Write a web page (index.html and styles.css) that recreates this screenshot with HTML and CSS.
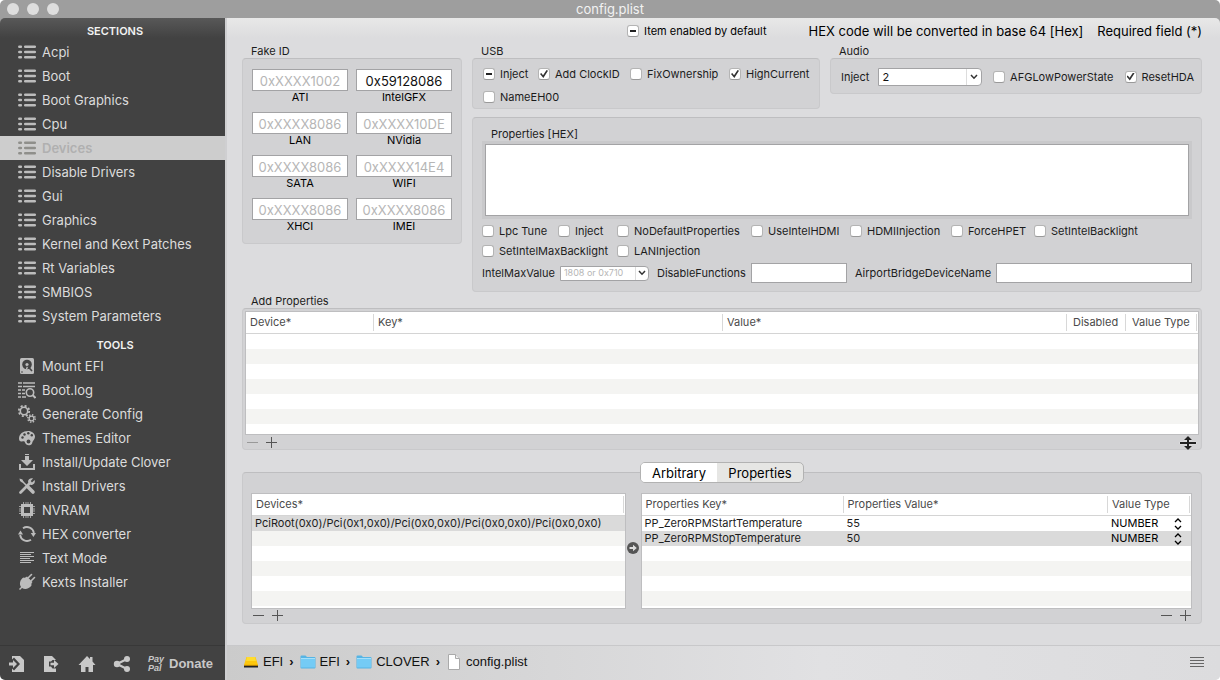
FILE: index.html
```html
<!DOCTYPE html>
<html lang="en">
<head>
  <meta charset="utf-8">
  <title>config.plist</title>
  <link rel="stylesheet" href="styles.css">
</head>
<body>
  <svg class="sprite" aria-hidden="true">
    <symbol id="i-list" viewBox="0 0 18 14">
      <path d="M1.300 1.800h1.600M7.200 1.800h9.600M1.300 7h1.600M7.200 7h9.600M1.300 12.200h1.600M7.200 12.200h9.600" stroke="currentColor" stroke-width="2.500" stroke-linecap="round"/>
    </symbol>
    <symbol id="i-chevron" viewBox="0 0 8 6">
      <path d="M1 1l3 3.200L7 1" fill="none" stroke="currentColor" stroke-width="1.500"/>
    </symbol>
    <symbol id="i-updown" viewBox="0 0 8 12">
      <path d="M1 4l3-3 3 3M1 8l3 3 3-3" fill="none" stroke="currentColor" stroke-width="1.300"/>
    </symbol>
    <symbol id="i-folder" viewBox="0 0 16 14">
      <path d="M.5 1.500Q.5.5 1.500.5h4l1.500 1.500h7.500q1 0 1 1v9.500q0 1-1 1h-13q-1 0-1-1z" fill="#56b4e4"/>
      <path d="M1 4h14v8.500H1z" fill="#74cbf5"/>
      <path d="M1 3.500h14" stroke="#a5e0fb"/>
    </symbol>
    <symbol id="i-minus" viewBox="0 0 12 12"><path d="M0 6.500h11" stroke="currentColor"/></symbol>
    <symbol id="i-plus" viewBox="0 0 12 12"><path d="M0 6.500h11M5.500 1v11" stroke="currentColor"/></symbol>
  </svg>

  <header class="titlebar">
    <div class="lights"><i></i><i></i><i></i></div>
    <h1>config.plist</h1>
  </header>

  <div class="window">
    <aside class="sidebar">
      <nav>
        <h2>SECTIONS</h2>
        <a href="#"><svg class="list"><use href="#i-list"/></svg>Acpi</a>
        <a href="#"><svg class="list"><use href="#i-list"/></svg>Boot</a>
        <a href="#"><svg class="list"><use href="#i-list"/></svg>Boot Graphics</a>
        <a href="#"><svg class="list"><use href="#i-list"/></svg>Cpu</a>
        <a href="#" class="active"><svg class="list"><use href="#i-list"/></svg>Devices</a>
        <a href="#"><svg class="list"><use href="#i-list"/></svg>Disable Drivers</a>
        <a href="#"><svg class="list"><use href="#i-list"/></svg>Gui</a>
        <a href="#"><svg class="list"><use href="#i-list"/></svg>Graphics</a>
        <a href="#"><svg class="list"><use href="#i-list"/></svg>Kernel and Kext Patches</a>
        <a href="#"><svg class="list"><use href="#i-list"/></svg>Rt Variables</a>
        <a href="#"><svg class="list"><use href="#i-list"/></svg>SMBIOS</a>
        <a href="#"><svg class="list"><use href="#i-list"/></svg>System Parameters</a>
      </nav>
      <nav class="tools">
        <h2>TOOLS</h2>
        <a href="#">
          <svg viewBox="0 0 18 18"><rect x="2" y="1" width="14" height="16" rx="1.500" fill="currentColor"/><circle cx="9" cy="7.500" r="4.800" fill="#424242"/><circle cx="9" cy="7.500" r="1.600" fill="currentColor"/><path d="M7 14l2-5 2 1z" fill="currentColor"/><path d="M9.500 9l4.500 5" stroke="#424242" stroke-width="1.600"/><circle cx="4" cy="15" r=".8" fill="#424242"/></svg>
          Mount EFI</a>
        <a href="#">
          <svg viewBox="0 0 18 18"><path d="M0 2h4M5 2h12M0 5.500h4M5 5.500h12M0 9h3M4 9h3M0 12.500h3M4 12.500h3M0 16h3M4 16h4" stroke="currentColor" stroke-width="1.700"/><circle cx="12" cy="11.500" r="3.700" fill="none" stroke="currentColor" stroke-width="1.600"/><path d="M14.500 14l3 3" stroke="currentColor" stroke-width="2"/></svg>
          Boot.log</a>
        <a href="#">
          <svg viewBox="0 0 18 18" fill="none" stroke="currentColor"><circle cx="6" cy="6" r="3.700" stroke-width="1.600"/><circle cx="6" cy="6" r="5.200" stroke-width="1.800" stroke-dasharray="2.050 2.030"/><circle cx="13.500" cy="13.500" r="2.400" stroke-width="1.300"/><circle cx="13.500" cy="13.500" r="3.700" stroke-width="1.500" stroke-dasharray="1.450 1.456"/></svg>
          Generate Config</a>
        <a href="#">
          <svg viewBox="0 0 18 18"><path d="M10 2c4 0 7 2.500 7 5.500 0 2-1 3-2 4.500s-.5 3-2.500 4c-2.500 1-5-.5-5.500-2.500-.3-1.500-1.500-1.500-3-1C2 13 1 11.500 1 9.500 1 5 5 2 10 2z" fill="currentColor"/><g fill="#424242"><circle cx="4.500" cy="8.500" r="1.200"/><circle cx="6.500" cy="5.500" r="1.200"/><circle cx="10.300" cy="4.300" r="1.200"/><circle cx="13.800" cy="6.300" r="1.200"/><circle cx="10.500" cy="12.500" r="1.900"/></g></svg>
          Themes Editor</a>
        <a href="#">
          <svg viewBox="0 0 18 18"><path d="M7 1h4v1H7zM7 3h4v4h4l-6 6-6-6h4zM1 11h2v4h12v-4h2v6H1z" fill="currentColor"/></svg>
          Install/Update Clover</a>
        <a href="#">
          <svg viewBox="0 0 18 18"><path d="M4 4l10.500 10.500" stroke="currentColor" stroke-width="1.500"/><path d="M1.500 1.500l3 1 1 2.500-1.500.5-2-1.500z" fill="currentColor"/><path d="M10.500 10.500l4.500 4.500" stroke="currentColor" stroke-width="3.600" stroke-linecap="round"/><path d="M2.500 15.500l9-9" stroke="currentColor" stroke-width="2.800" stroke-linecap="round"/><path d="M15 1.500L12.700 4l1.300 1.400L16.600 3c1 2.500-1 5.200-3.800 5L10 5.300C9.800 2.500 12.500.8 15 1.500z" fill="currentColor"/></svg>
          Install Drivers</a>
        <a href="#">
          <svg viewBox="0 0 18 18" fill="none" stroke="currentColor"><rect x="4.500" y="4.500" width="9" height="9" stroke-width="3"/><path d="M5.500 1v16M8 1v2M8 15v2M10 1v2M10 15v2M12.500 1v16M1 5.500h16M1 8h2M15 8h2M1 10h2M15 10h2M1 12.500h16" stroke-width="1" opacity=".8"/><rect x="6" y="6" width="6" height="6" fill="#424242" stroke="none"/></svg>
          NVRAM</a>
        <a href="#">
          <svg viewBox="0 0 18 18"><path d="M5 3.300A7 7 0 0 1 15.900 8M13 14.700A7 7 0 0 1 2.100 10" fill="none" stroke="currentColor" stroke-width="1.800"/><path d="M12.700 8h5.300l-2.600 4zM0 9.500h5L2.500 5.500z" fill="currentColor"/></svg>
          HEX converter</a>
        <a href="#">
          <svg viewBox="0 0 18 18"><path d="M2 3.500h14M2 5.500h11M2 7.500h14M2 9.500h10M2 11.500h14M2 13.500h11" stroke="currentColor"/></svg>
          Text Mode</a>
        <a href="#">
          <svg viewBox="0 0 18 18"><path d="M5.500 4.500c1.500.5 2.500 0 3.500-1l5.500 5.500c-1 1-1.200 2-1 3.500-2.500 3.500-6.500 4.500-9.500 2.500L2 17l-1-1 2-2C1 11 2 6.500 5.500 4.500z" fill="currentColor"/><path d="M10.500 4.500l3-3M13.500 7.500l3-3" stroke="currentColor" stroke-width="1.600" stroke-linecap="round"/></svg>
          Kexts Installer</a>
      </nav>
      <div class="side-footer">
        <button aria-label="Import"><svg viewBox="0 0 18 18"><path d="M4 1h8l4 4v12H4v-3.500l2 2 6-6.500-6-6.500-2 2z" fill="currentColor"/><path d="M1 7.500h4V5l4 4-4 4v-2.500H1z" fill="currentColor"/></svg></button>
        <button aria-label="Export"><svg viewBox="0 0 18 18"><path d="M1 1h8l4 4H9.500L8 6.500H6v5h2l1.500 2H13V17H1z" fill="currentColor"/><path d="M7.500 7.700H11V5l4.500 4-4.500 4v-2.700H7.500z" fill="currentColor"/></svg></button>
        <button aria-label="Home"><svg viewBox="0 0 18 18"><path d="M9 1l3 3V2h2.500v4.500L17.500 10H15v7h-4.500v-5h-3v5H3v-7H.5z" fill="currentColor"/></svg></button>
        <button aria-label="Share"><svg viewBox="0 0 18 18"><path d="M14 4L4 9l10 5" fill="none" stroke="currentColor" stroke-width="2.200"/><g fill="currentColor"><circle cx="14" cy="4" r="3"/><circle cx="4" cy="9" r="3.200"/><circle cx="14" cy="14" r="3"/></g></svg></button>
        <button class="donate"><em>Pay<br>Pal</em>Donate</button>
      </div>
    </aside>

    <main>
      <div class="content">
        <div class="notes">
          <label class="check"><input type="checkbox" class="mixed">Item enabled by default</label>
          <p>HEX code will be converted in base 64 [Hex]</p>
          <p>Required field (*)</p>
        </div>

        <div class="top">
          <section class="fake">
            <h3>Fake ID</h3>
            <div class="box ids">
              <label><input placeholder="0xXXXX1002">ATI</label>
              <label><input value="0x59128086">IntelGFX</label>
              <label><input placeholder="0xXXXX8086">LAN</label>
              <label><input placeholder="0xXXXX10DE">NVidia</label>
              <label><input placeholder="0xXXXX8086">SATA</label>
              <label><input placeholder="0xXXXX14E4">WIFI</label>
              <label><input placeholder="0xXXXX8086">XHCI</label>
              <label><input placeholder="0xXXXX8086">IMEI</label>
            </div>
          </section>

          <section class="usb">
            <h3>USB</h3>
            <div class="box usb-grid">
              <label class="check"><input type="checkbox" class="mixed">Inject</label>
              <label class="check"><input type="checkbox" checked>Add ClockID</label>
              <label class="check"><input type="checkbox">FixOwnership</label>
              <label class="check"><input type="checkbox" checked>HighCurrent</label>
              <label class="check"><input type="checkbox">NameEH00</label>
            </div>
          </section>

          <section class="audio">
            <h3>Audio</h3>
            <div class="box audio-row">
              <label for="audioInject">Inject</label>
              <div class="combo">
                <select id="audioInject"><option>2</option></select>
                <span><svg><use href="#i-chevron"/></svg></span>
              </div>
              <label class="check"><input type="checkbox">AFGLowPowerState</label>
              <label class="check"><input type="checkbox" checked>ResetHDA</label>
            </div>
          </section>

          <section class="box hex">
            <label class="hex-label" for="hexProps">Properties [HEX]</label>
            <div class="frame"><textarea id="hexProps"></textarea></div>
            <div class="hex-grid">
              <label class="check"><input type="checkbox">Lpc Tune</label>
              <label class="check"><input type="checkbox">Inject</label>
              <label class="check"><input type="checkbox">NoDefaultProperties</label>
              <label class="check"><input type="checkbox">UseIntelHDMI</label>
              <label class="check"><input type="checkbox">HDMIInjection</label>
              <label class="check"><input type="checkbox">ForceHPET</label>
              <label class="check"><input type="checkbox">SetIntelBacklight</label>
              <label class="check wide"><input type="checkbox">SetIntelMaxBacklight</label>
              <label class="check"><input type="checkbox">LANInjection</label>
            </div>
            <div class="hex-row">
              <label for="maxValue">IntelMaxValue</label>
              <div class="combo small">
                <select id="maxValue"><option>1808 or 0x710</option></select>
                <span><svg><use href="#i-chevron"/></svg></span>
              </div>
              <label for="disableFn">DisableFunctions</label>
              <input id="disableFn">
              <label for="airport">AirportBridgeDeviceName</label>
              <input id="airport" class="grow">
            </div>
          </section>
        </div>

        <section class="add">
          <h3>Add Properties</h3>
          <div class="box add-box">
            <div class="grid-view">
              <table>
                <colgroup><col class="c-device"><col class="c-key"><col><col class="c-disabled"><col class="c-type"></colgroup>
                <thead><tr><th><span>Device*</span></th><th><span>Key*</span></th><th><span>Value*</span></th><th><span class="pad">Disabled</span></th><th><span class="pad last">Value Type</span></th></tr></thead>
              </table>
            </div>
            <div class="pm">
              <button aria-label="Remove" disabled><svg><use href="#i-minus"/></svg></button>
              <button aria-label="Add"><svg><use href="#i-plus"/></svg></button>
              <svg class="resize" viewBox="0 0 18 14"><path d="M9 0l4 4h-3v2h7v2h-7v2h3l-4 4-4-4h3V8H1V6h7V4H5z" fill="#222" stroke="#eee" stroke-width=".6" paint-order="stroke"/></svg>
            </div>
          </div>
        </section>

        <section class="box devices">
          <div class="tabs">
            <button class="on">Arbitrary</button><button>Properties</button>
          </div>
          <div class="pane left">
            <div class="grid-view">
              <table>
                <thead><tr><th><span class="last">Devices*</span></th></tr></thead>
                <tbody><tr class="selected"><td>PciRoot(0x0)/Pci(0x1,0x0)/Pci(0x0,0x0)/Pci(0x0,0x0)/Pci(0x0,0x0)</td></tr></tbody>
              </table>
            </div>
            <div class="pm">
              <button aria-label="Remove"><svg><use href="#i-minus"/></svg></button>
              <button aria-label="Add"><svg><use href="#i-plus"/></svg></button>
            </div>
          </div>
          <svg class="arrow" viewBox="0 0 12 12"><circle cx="6" cy="6" r="6" fill="#555"/><path d="M2.500 5h3.500V2.800L9.800 6 6 9.200V7H2.500z" fill="#ddd"/></svg>
          <div class="pane right">
            <div class="grid-view">
              <table>
                <colgroup><col class="c-pkey"><col><col class="c-ptype"></colgroup>
                <thead><tr><th><span>Properties Key*</span></th><th><span>Properties Value*</span></th><th><span class="last">Value Type</span></th></tr></thead>
                <tbody>
                  <tr><td>PP_ZeroRPMStartTemperature</td><td>55</td><td class="type">NUMBER<svg><use href="#i-updown"/></svg></td></tr>
                  <tr class="selected"><td>PP_ZeroRPMStopTemperature</td><td>50</td><td class="type">NUMBER<svg><use href="#i-updown"/></svg></td></tr>
                </tbody>
              </table>
            </div>
            <div class="pm end">
              <button aria-label="Remove"><svg><use href="#i-minus"/></svg></button>
              <button aria-label="Add"><svg><use href="#i-plus"/></svg></button>
            </div>
          </div>
        </section>
      </div>

      <footer>
        <a href="#"><svg viewBox="0 0 16 14"><path d="M3.500 2h9L15 10H1z" fill="#fdc70c"/><path d="M4 2h8l1 4H3z" fill="#ffdc2e"/><path d="M1 10h14v2.500H1z" fill="#222"/><path d="M1 10.300h14" stroke="#d99a00"/></svg>EFI</a>
        <b>›</b>
        <a href="#"><svg><use href="#i-folder"/></svg>EFI</a>
        <b>›</b>
        <a href="#"><svg><use href="#i-folder"/></svg>CLOVER</a>
        <b>›</b>
        <a href="#"><svg class="file" viewBox="0 0 12 16"><path d="M.5.5h7l4 4v11H.5z" fill="#fff" stroke="#aaa"/><path d="M7.500.5v4h4" fill="#eee" stroke="#aaa"/></svg>config.plist</a>
        <button aria-label="Menu"><svg viewBox="0 0 14 12"><path d="M0 1.500h14M0 4.500h14M0 7.500h14M0 10.500h14" stroke="#666"/></svg></button>
      </footer>
    </main>
  </div>

  <script>
    // "-" state can only be set from script
    document.querySelectorAll(".mixed").forEach(box => {
      box.indeterminate = true;
    });
  </script>
</body>
</html>
```
FILE: styles.css
```css
* {
  box-sizing: border-box;
}
body {
  margin: 0;
  min-height: 100vh;
  display: flex;
  flex-direction: column;
  background: #fff;
  color: #1c1c1c;
  font-family: Inter, "Liberation Sans", sans-serif;
  font-size: 11px;
  line-height: 14px;
}
h1, h2, h3, p {
  margin: 0;
  font-weight: normal;
}
a {
  color: inherit;
  text-decoration: none;
}
button {
  padding: 0;
  border: none;
  background: none;
  color: inherit;
  font: inherit;
}
input, select, textarea {
  font: inherit;
  color: #111;
  background: #fff;
  border: 1px solid #a3a3a5;
  border-radius: 0;
  margin: 0;
}
svg {
  display: block;
  flex: none;
}
.sprite {
  position: absolute;
  width: 0;
  height: 0;
}

/* title bar */
.titlebar {
  height: 18px;
  background: #9e9e9e;
  border-radius: 5px 5px 0 0;
  display: grid;
  grid-template-columns: 1fr auto 1fr;
  align-items: center;
}
.titlebar h1 {
  grid-column: 2;
  font-size: 13px;
  line-height: 18px;
  color: #f2f2f2;
}
.lights {
  display: flex;
  gap: 8px;
  padding-left: 7px;
}
.lights i {
  width: 12px;
  height: 12px;
  border-radius: 50%;
  background: #dedede;
}

.window {
  flex: 1;
  display: flex;
  background: linear-gradient(#9e9e9e 50%, #fff 50%);
}

/* sidebar */
.sidebar {
  width: 225px;
  flex: none;
  display: flex;
  flex-direction: column;
  color: #dcdcdc;
  background: linear-gradient(#585858, #424242 20px);
  border-radius: 5px 0 0 5px;
}
.sidebar nav {
  padding-top: 4px;
}
.sidebar nav.tools {
  padding-top: 8px;
}
.sidebar h2 {
  padding-left: 5px;
  text-align: center;
  font-size: 11px;
  line-height: 18px;
  font-weight: 600;
  color: #f2f2f2;
}
.sidebar nav a {
  display: flex;
  align-items: center;
  gap: 6px;
  height: 24px;
  padding-left: 18px;
  font-size: 13px;
}
.sidebar nav svg {
  width: 18px;
  height: 18px;
  color: #bcbcbc;
}
.sidebar nav svg.list {
  height: 14px;
}
.sidebar nav a.active {
  background: #cdcdcd;
  color: #b0b0b0;
  font-weight: 600;
}
.sidebar nav a.active svg {
  color: #8f8f8b;
}
.side-footer {
  margin-top: auto;
  height: 35px;
  padding: 1px 8px 0;
  border-top: 1px solid #383838;
  display: flex;
  align-items: center;
  gap: 17px;
  color: #c8c8c8;
}
.side-footer svg {
  width: 18px;
  height: 18px;
}
.donate {
  display: flex;
  align-items: center;
  gap: 5px;
  font: bold 13px/16px "Liberation Sans", sans-serif;
}
.donate em {
  font-size: 9px;
  line-height: 9px;
  text-align: left;
}

/* main area */
main {
  flex: 1;
  min-width: 0;
  display: flex;
  flex-direction: column;
  border-left: 2px solid #cfcfd1;
  background: linear-gradient(#e8e8e8, #dcdcde 20px);
  border-radius: 0 5px 5px 0;
  overflow: hidden;
}
.content {
  flex: 1;
  display: flex;
  flex-direction: column;
  padding: 4px 18px 21px 15px;
}
.box {
  background: #d2d2d4;
  border: 1px solid #c9c9cb;
  border-top-color: #bebec0;
  border-radius: 4px;
}
h3 {
  padding: 1px 9px 0;
  font-size: 11px;
  line-height: 14px;
}
.notes {
  display: flex;
  justify-content: flex-end;
  align-items: center;
  gap: 14px;
  height: 18px;
  font-size: 13px;
  color: #000;
}
.notes .check {
  margin-right: 28px;
}
.check {
  display: flex;
  align-items: center;
  gap: 5px;
  font-size: 11px;
  white-space: nowrap;
}
.check input {
  appearance: none;
  flex: none;
  width: 12px;
  height: 12px;
  border: 1px solid #b4b4b4;
  border-bottom-color: #999;
  border-radius: 3px;
  display: grid;
  place-items: center;
}
.check input:checked::before {
  content: "";
  width: 8px;
  height: 8px;
  background: #333;
  clip-path: polygon(0 50%, 16% 38%, 38% 65%, 82% 0, 100% 10%, 42% 100%);
}
.check input:indeterminate::before {
  content: "";
  width: 6px;
  height: 2px;
  background: #222;
}

.top {
  display: grid;
  grid-template-columns: 220px 348px 1fr;
  grid-template-rows: auto 1fr;
  column-gap: 10px;
  row-gap: 8px;
}
.top section {
  min-width: 0;
}
.top h3 {
  padding-top: 4px;
}
.fake {
  grid-row: span 2;
}
.ids {
  display: grid;
  grid-template-columns: 1fr 1fr;
  gap: 9px 8px;
  padding: 10px 9px 11px;
}
.ids label {
  text-align: center;
  line-height: 12px;
  color: #000;
}
.ids input {
  display: block;
  width: 100%;
  height: 22px;
  padding: 2px 2px 0;
  text-align: center;
  font-size: 13px;
}
::placeholder {
  color: #b6b6b6;
}
.usb-grid {
  display: grid;
  grid-template-columns: 55px 92px 99px auto;
  grid-auto-rows: 18px;
  row-gap: 5px;
  padding: 6px 0 2px 10px;
}
.usb-grid .check:last-child {
  grid-column: span 2;
}
.audio-row {
  display: flex;
  align-items: center;
  gap: 9px;
  height: 36px;
  padding: 1px 7px 0 10px;
}
.audio-row .check {
  margin-left: 2px;
}

.combo {
  position: relative;
  width: 105px;
}
.combo select {
  appearance: none;
  display: block;
  width: 100%;
  height: 18px;
  padding: 0 18px 0 3px;
  border-radius: 0 4px 4px 0;
}
.combo span {
  position: absolute;
  top: 1px;
  bottom: 1px;
  right: 1px;
  width: 15px;
  border-left: 1px solid #ddd;
  display: grid;
  place-items: center;
  color: #333;
  pointer-events: none;
}
.combo svg {
  width: 8px;
  height: 6px;
}
.combo.small {
  width: 89px;
}
.combo.small select {
  height: 15px;
  font-size: 9px;
  line-height: 12px;
  color: #b6b6b6;
}
.combo.small span {
  width: 13px;
}

.hex {
  grid-column: 2 / 4;
  padding: 9px 9px 8px;
}
.hex-label {
  display: block;
  padding-left: 9px;
}
.frame {
  padding: 3px;
  background: #c9c9cb;
}
.frame textarea {
  display: block;
  width: 100%;
  height: 72px;
  resize: none;
}
.hex-grid {
  display: grid;
  grid-template-columns: 76px 59px 134px 99px 101px 83px auto;
  grid-auto-rows: 20px;
  padding-top: 2px;
}
.hex-grid .wide {
  grid-column: span 2;
}
.hex-row {
  display: flex;
  align-items: center;
  gap: 5px;
  padding-top: 2px;
  white-space: nowrap;
}
.hex-row input {
  width: 96px;
  height: 20px;
  margin-right: 3px;
}
.hex-row .combo {
  margin-right: 3px;
}
.hex-row input.grow {
  flex: 1;
  min-width: 0;
  margin-right: 0;
}

/* tables */
.add {
  flex: 1;
  display: flex;
  flex-direction: column;
  padding-top: 1px;
}
.add-box {
  flex: 1;
  display: flex;
  flex-direction: column;
  padding: 2px 2px 0;
}
.grid-view {
  flex: 1;
  min-height: 116px;
  border: 1px solid #bebec0;
  overflow: hidden;
  background: repeating-linear-gradient(#fff 0 15px, #f4f4f2 15px 30px) 0 22px;
}
.grid-view table {
  width: 100%;
  table-layout: fixed;
  border-spacing: 0;
}
.grid-view th {
  height: 22px;
  padding: 0;
  background: #fff;
  border-bottom: 1px solid #d4d4d4;
  font-weight: normal;
  text-align: left;
  color: #4a4a4a;
  white-space: nowrap;
}
.grid-view th span {
  display: block;
  padding-left: 4px;
  line-height: 17px;
}
.grid-view th + th span {
  border-left: 1px solid #d8d8d8;
}
.grid-view th span.pad {
  padding-left: 6px;
}
.grid-view th span.last {
  border-right: 1px solid #d8d8d8;
  margin-right: 1px;
}
.grid-view td {
  height: 15px;
  padding: 0 3px;
  line-height: 15px;
  white-space: nowrap;
}
.grid-view td + td {
  padding-left: 4px;
}
.grid-view tr.selected {
  background: #dadada;
}
.grid-view td.type {
  color: #000;
}
.grid-view td.type svg {
  float: right;
  width: 8px;
  height: 12px;
  margin: 2px 6px 0 0;
}
.c-device {
  width: 127px;
}
.c-key {
  width: 349px;
}
.c-disabled {
  width: 59px;
}
.c-type {
  width: 73px;
}
.c-pkey {
  width: 201px;
}
.c-ptype {
  width: 84px;
}
.pm {
  display: flex;
  gap: 7px;
  height: 13px;
  padding: 0 2px;
}
.add-box .pm {
  height: 14px;
  padding-top: 1px;
}
.pm svg {
  width: 12px;
  height: 12px;
  color: #555;
}
.pm button {
  height: 12px;
}
.pm button:disabled svg {
  color: #999;
}
.pm.end {
  justify-content: flex-end;
  padding-right: 0;
}
.pm svg.resize {
  width: 18px;
  height: 14px;
  margin-left: auto;
}

.devices {
  position: relative;
  margin-top: 22px;
  padding: 20px 9px 1px 8px;
  display: flex;
}
.pane {
  display: flex;
  flex-direction: column;
}
.pane.left {
  flex: 375;
}
.pane.right {
  flex: 552;
}
.arrow {
  width: 12px;
  height: 12px;
  margin: 49px 2px 0 1px;
}
/* sits over the top border of the box */
.tabs {
  position: absolute;
  top: -11px;
  left: 0;
  right: 0;
  margin: 0 auto;
  width: 164px;
  height: 21px;
  display: flex;
  border: 1px solid #b2b2b2;
  border-radius: 5px;
  overflow: hidden;
  background: #e6e6e4;
}
.tabs button {
  flex: 86;
  font-size: 13px;
  color: #000;
}
.tabs button.on {
  flex: 76;
  background: #fff;
}

/* path bar */
footer {
  height: 35px;
  display: flex;
  align-items: center;
  gap: 6px;
  padding: 0 16px 2px;
  border-top: 1px solid #c8c8ca;
  background: linear-gradient(90deg, #cbcbcb, #e1e1e3 60%, #dcdcde);
  font: 13px/16px "Liberation Sans", sans-serif;
  color: #111;
}
footer a {
  display: flex;
  align-items: center;
  gap: 4px;
}
footer a svg {
  width: 16px;
  height: 14px;
}
footer a svg.file {
  width: 12px;
  height: 16px;
  margin: 0 2px;
}
footer button {
  margin-left: auto;
}
footer button svg {
  width: 14px;
  height: 12px;
}
```
